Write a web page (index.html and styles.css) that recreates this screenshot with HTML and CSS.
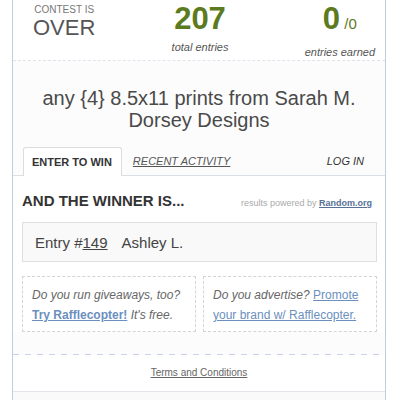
FILE: index.html
```html
<!DOCTYPE html>
<html lang="en">
<head>
    <meta charset="UTF-8">
    <title>Rafflecopter giveaway</title>
    <link rel="stylesheet" href="styles.css">
</head>
<body>
    <div class="widget">
        <div class="stats">
            <div class="stat stat-over">
                <div class="stat-small">CONTEST IS</div>
                <div class="stat-over-big">OVER</div>
            </div>
            <div class="stat">
                <div class="stat-num">207</div>
                <div class="stat-label">total entries</div>
            </div>
            <div class="stat">
                <div class="stat-num">0<span class="stat-of"> /0</span></div>
                <div class="stat-label">entries earned</div>
            </div>
        </div>

        <div class="prize">any {4} 8.5x11 prints from Sarah M. Dorsey Designs</div>

        <div class="tabs">
            <div class="tab active">ENTER TO WIN</div>
            <a class="tab link" href="#">RECENT ACTIVITY</a>
            <a class="tab login" href="#">LOG IN</a>
        </div>

        <div class="winner">
            <div class="winner-head">
                <h2>AND THE WINNER IS...</h2>
                <span class="powered">results powered by <a href="#">Random.org</a></span>
            </div>
            <div class="entry">Entry #<a href="#">149</a> <span class="name">Ashley L.</span></div>
            <div class="promos">
                <div class="promo">Do you run giveaways, too? <a class="strong" href="#">Try Rafflecopter!</a> It's free.</div>
                <div class="promo">Do you advertise? <a href="#">Promote your brand w/ Rafflecopter.</a></div>
            </div>
        </div>

        <div class="dash"></div>
        <div class="terms"><a href="#">Terms and Conditions</a></div>
        <div class="foot">Powered by <span class="logo">Rafflecopter</span></div>
    </div>
</body>
</html>
```

FILE: styles.css
```css
body {
    margin: 0;
    background: #fff;
    font-family: "Liberation Sans", Arial, sans-serif;
    color: #555;
}
.widget {
    margin-left: 12px;
    width: 372px;
    border-left: 1px solid #bfcce6;
    border-right: 1px solid #bfcce6;
    background: #fcfcfc;
    height: 400px;
    overflow: hidden;
}
.stats {
    display: flex;
    justify-content: space-between;
    height: 60px;
    padding: 0 10px 0 20px;
    border-bottom: 1px dashed #dfe4ec;
    background: #fff;
}
.stat {
    text-align: center;
}
.stat-small {
    font-size: 10px;
    color: #777;
    margin-top: 5px;
    line-height: 10px;
}
.stat-over-big {
    font-size: 22px;
    color: #555;
    line-height: 24px;
    margin-top: 1px;
}
.stat-num {
    font-size: 31px;
    font-weight: bold;
    color: #5c7a20;
    line-height: 30px;
    margin-top: 4px;
}
.stat-of {
    font-size: 15px;
    font-weight: normal;
    color: #5c7a20;
}
.stat-label {
    font-size: 11px;
    font-style: italic;
    color: #555;
    margin-top: 7px;
}
.prize {
    text-align: center;
    font-size: 20px;
    line-height: 22px;
    color: #4a4a4a;
    padding: 26px 20px 16px;
}
.tabs {
    display: flex;
    align-items: flex-end;
    padding: 0 21px 0 10px;
    border-bottom: 1px solid #d9dee7;
    height: 28px;
}
.tab {
    font-size: 11px;
    line-height: 27px;
    padding: 0 9px 0 8px;
}
.tab.active {
    font-weight: bold;
    color: #333;
    background: #fff;
    border: 1px solid #dcdcdc;
    border-bottom: none;
    border-radius: 3px 3px 0 0;
    margin-bottom: -1px;
    line-height: 28px;
}
.tab.link {
    font-style: italic;
    color: #555;
    margin-left: 3px;
}
.tab.login {
    font-style: italic;
    color: #333;
    text-decoration: none;
    margin-left: auto;
    padding: 0;
}
.winner {
    padding: 0 8px 0 9px;
    background: #fff;
}
.winner-head {
    display: flex;
    justify-content: space-between;
    align-items: baseline;
    padding-top: 16px;
}
.winner-head h2 {
    margin: 0;
    font-size: 15px;
    line-height: 18px;
    color: #333;
}
.powered {
    font-size: 9px;
    color: #aaa;
    padding-right: 5px;
}
.powered a {
    color: #587196;
    font-weight: bold;
}
.entry {
    margin-top: 12px;
    height: 40px;
    box-sizing: border-box;
    display: flex;
    align-items: center;
    padding-left: 12px;
    border: 1px solid #dddfe3;
    background: #f9f9f9;
    font-size: 15px;
    color: #444;
}
.entry a {
    color: #444;
}
.entry .name {
    margin-left: 14px;
}
.promos {
    display: grid;
    grid-template-columns: 1fr 1fr;
    gap: 7px;
    margin-top: 14px;
}
.promo {
    box-sizing: border-box;
    border: 1px dashed #d4d4d4;
    height: 56px;
    padding: 8px 6px 0 9px;
    font-size: 12px;
    line-height: 20px;
    font-style: italic;
    color: #666;
}
.promo a {
    color: #6b8fbe;
    font-style: normal;
}
.promo a.strong {
    font-weight: bold;
}
.dash {
    height: 1px;
    margin-top: 22px;
    background: repeating-linear-gradient(to right, #c8d2e6 0 6px, transparent 6px 12px);
}
.terms {
    text-align: center;
    font-size: 10px;
    line-height: 36px;
    height: 36px;
    border-bottom: 1px solid #e3e5ea;
    background: #fff;
}
.terms a {
    color: #666;
}
.foot {
    background: #fafafa;
    text-align: center;
    font-size: 11px;
    color: #888;
    padding-top: 6px;
}
.logo {
    font-style: italic;
}
```
